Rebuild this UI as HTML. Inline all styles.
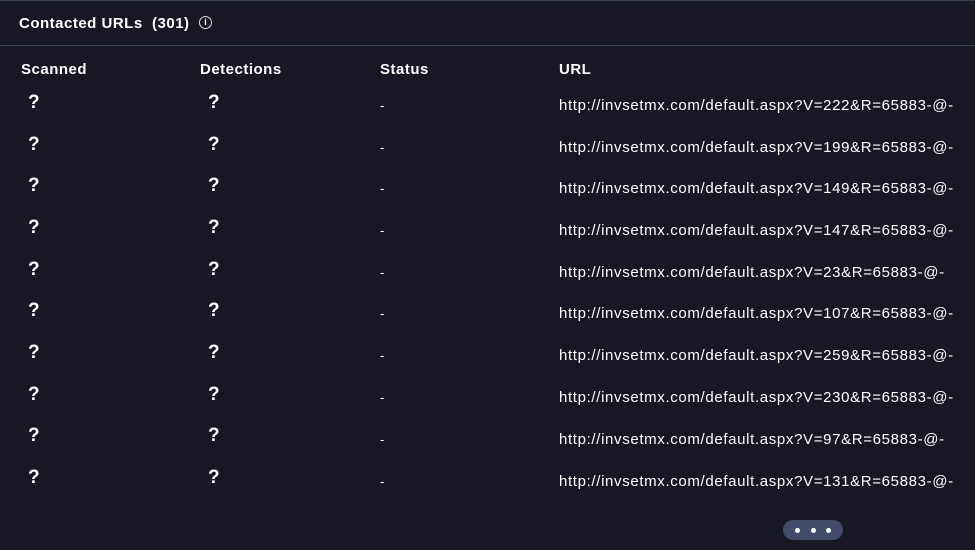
<!DOCTYPE html>
<html><head><meta charset="utf-8"><style>
*{margin:0;padding:0;box-sizing:border-box}
body{width:975px;height:550px;background:#181824;color:#fff;font-family:"Liberation Sans",sans-serif;position:relative;overflow:hidden}
.top{position:absolute;left:0;top:0;width:975px;height:1px;background:#3a4055}
.title{position:absolute;left:19px;top:15px;font-size:15px;font-weight:bold;letter-spacing:0.5px}
.info{position:absolute;left:199px;top:16px;width:13px;height:13px;border:1.3px solid #ddd;border-radius:50%;font-size:9px;text-align:center;line-height:11px;font-weight:bold}
.sep{position:absolute;left:0;top:45px;width:975px;height:1px;background:#3a4055}
.h{position:absolute;top:61px;font-size:15px;font-weight:bold;letter-spacing:0.5px}
.q{position:absolute;font-size:19px;font-weight:bold}
.d{position:absolute;left:380px;font-size:13px}
.u{position:absolute;left:559px;font-size:15px;letter-spacing:0.65px;white-space:nowrap}
.pill{position:absolute;left:783px;top:520px;width:60px;height:20px;border-radius:10px;background:#424b67}
.pill i{position:absolute;top:8px;width:5px;height:5px;border-radius:50%;background:#fff}
</style></head><body>
<div class="top"></div>
<div class="title">Contacted URLs&nbsp; (301)</div>
<div class="info">i</div>
<div class="sep"></div>
<div class="h" style="left:21px">Scanned</div>
<div class="h" style="left:200px">Detections</div>
<div class="h" style="left:380px">Status</div>
<div class="h" style="left:559px">URL</div>

<div class="q" style="left:28px;top:92px">?</div><div class="q" style="left:208px;top:92px">?</div><div class="d" style="top:98px">-</div><div class="u" style="top:97px">http://invsetmx.com/default.aspx?V=222&amp;R=65883-@-</div>
<div class="q" style="left:28px;top:134px">?</div><div class="q" style="left:208px;top:134px">?</div><div class="d" style="top:140px">-</div><div class="u" style="top:139px">http://invsetmx.com/default.aspx?V=199&amp;R=65883-@-</div>
<div class="q" style="left:28px;top:175px">?</div><div class="q" style="left:208px;top:175px">?</div><div class="d" style="top:181px">-</div><div class="u" style="top:180px">http://invsetmx.com/default.aspx?V=149&amp;R=65883-@-</div>
<div class="q" style="left:28px;top:217px">?</div><div class="q" style="left:208px;top:217px">?</div><div class="d" style="top:223px">-</div><div class="u" style="top:222px">http://invsetmx.com/default.aspx?V=147&amp;R=65883-@-</div>
<div class="q" style="left:28px;top:259px">?</div><div class="q" style="left:208px;top:259px">?</div><div class="d" style="top:265px">-</div><div class="u" style="top:264px">http://invsetmx.com/default.aspx?V=23&amp;R=65883-@-</div>
<div class="q" style="left:28px;top:300px">?</div><div class="q" style="left:208px;top:300px">?</div><div class="d" style="top:306px">-</div><div class="u" style="top:305px">http://invsetmx.com/default.aspx?V=107&amp;R=65883-@-</div>
<div class="q" style="left:28px;top:342px">?</div><div class="q" style="left:208px;top:342px">?</div><div class="d" style="top:348px">-</div><div class="u" style="top:347px">http://invsetmx.com/default.aspx?V=259&amp;R=65883-@-</div>
<div class="q" style="left:28px;top:384px">?</div><div class="q" style="left:208px;top:384px">?</div><div class="d" style="top:390px">-</div><div class="u" style="top:389px">http://invsetmx.com/default.aspx?V=230&amp;R=65883-@-</div>
<div class="q" style="left:28px;top:425px">?</div><div class="q" style="left:208px;top:425px">?</div><div class="d" style="top:432px">-</div><div class="u" style="top:431px">http://invsetmx.com/default.aspx?V=97&amp;R=65883-@-</div>
<div class="q" style="left:28px;top:467px">?</div><div class="q" style="left:208px;top:467px">?</div><div class="d" style="top:474px">-</div><div class="u" style="top:473px">http://invsetmx.com/default.aspx?V=131&amp;R=65883-@-</div>

<div class="pill"><i style="left:12px"></i><i style="left:28px"></i><i style="left:43px"></i></div>
</body></html>
